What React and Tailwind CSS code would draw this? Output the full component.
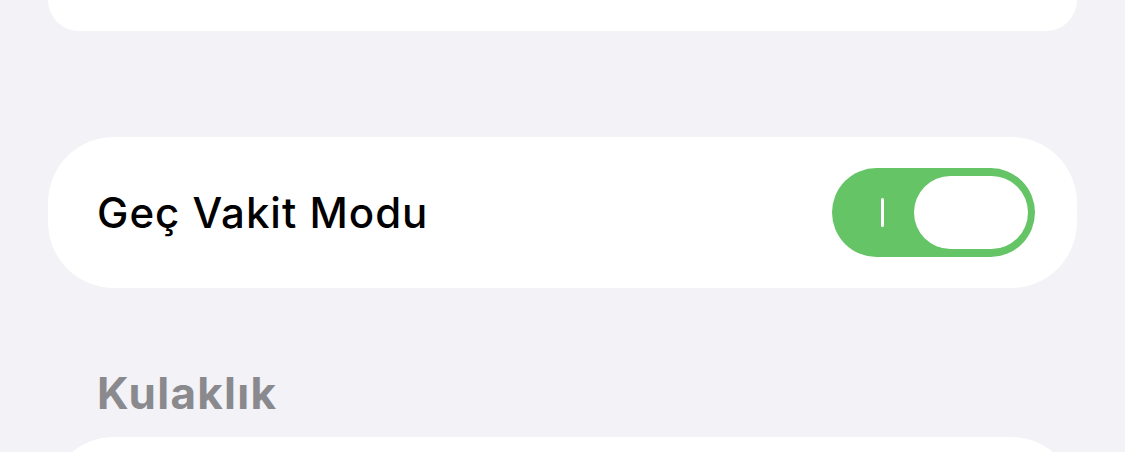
import React from "react";

function Toggle() {
  return (
    <div className="flex h-[89px] w-[203px] items-center rounded-full bg-[#65c466] pl-[49px] pr-[7px]">
      <span className="h-[29px] w-[3px] rounded-full bg-white" />
      <span className="ml-auto h-[73px] w-[114px] rounded-full bg-white" />
    </div>
  );
}

export default function App() {
  return (
    <div
      className="h-[452px] w-[1125px] overflow-hidden bg-[#f2f2f7] px-[48px]"
      style={{ fontFamily: "Inter, 'Noto Sans', sans-serif" }}
    >
      <div className="h-[31px] rounded-b-[70px] bg-white" />

      <div className="mt-[106px] flex h-[151px] items-center justify-between rounded-[66px] bg-white pl-[49px] pr-[42px]">
        <span className="text-[42px] leading-none font-medium tracking-[1px] text-black">
          Geç Vakit Modu
        </span>
        <Toggle />
      </div>

      <h2 className="mt-[80px] pl-[49px] text-[44px] leading-[50px] font-bold tracking-[1.3px] text-[#8a8a8e]">
        Kulaklık
      </h2>

      <div className="mt-[19px] h-[100px] rounded-t-[66px] bg-white" />
    </div>
  );
}
